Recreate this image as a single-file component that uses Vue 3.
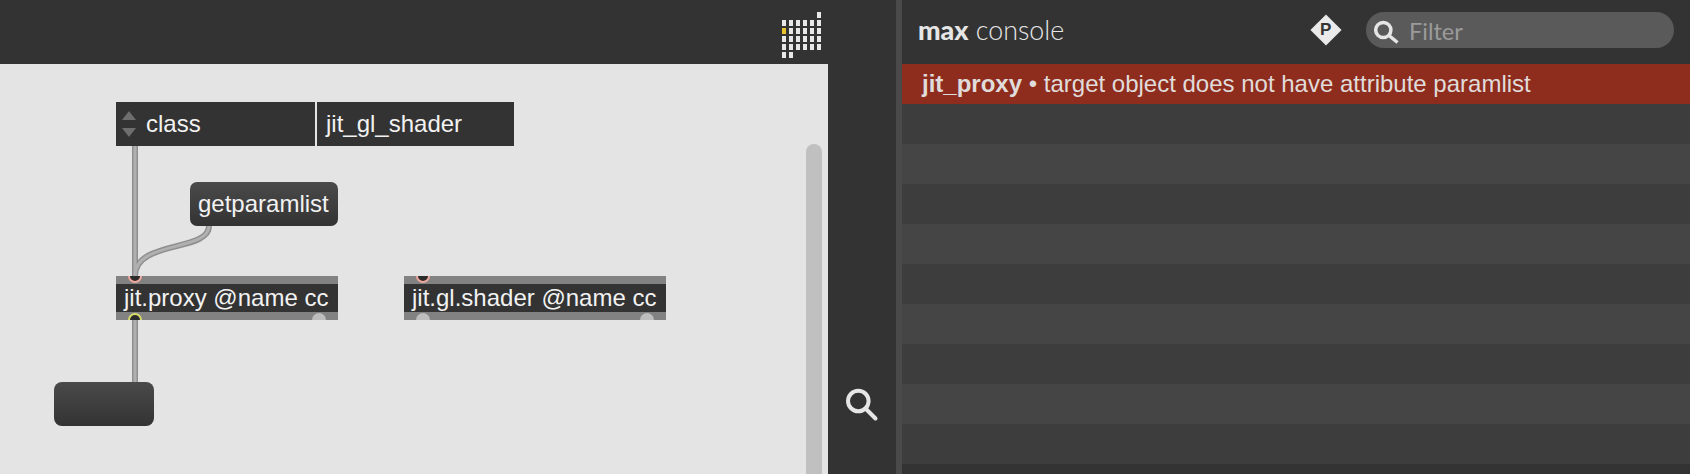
<template>
  <div class="app">
    <section class="patcher">
      <header class="toolbar">
        <div class="grid-icon">
          <span
            v-for="cell in gridCells"
            :key="cell.key"
            class="grid-cell"
            :class="{ off: !cell.on, lit: cell.lit }"
          ></span>
        </div>
      </header>
      <div class="patcher-body">
        <div class="canvas">
          <svg class="cords" width="806" height="410" viewBox="0 64 806 410">
            <g class="cord-edge">
              <path d="M135 146 V276" />
              <path d="M209 226 C209 252 135 240 135 276" />
              <path d="M135 320 V382" />
            </g>
            <g class="cord-core">
              <path d="M135 146 V276" />
              <path d="M209 226 C209 252 135 240 135 276" />
              <path d="M135 320 V382" />
            </g>
          </svg>

          <div class="node umenu">
            <span class="arrows"><i class="arrow-up"></i><i class="arrow-down"></i></span>
            class
          </div>
          <div class="node attr-value">jit_gl_shader</div>
          <div class="node message">getparamlist</div>

          <div class="node object proxy">
            <span class="port inlet" style="left: 12px"></span>
            <span class="obj-label">jit.proxy @name cc</span>
            <span class="port outlet active" style="left: 12px"></span>
            <span class="port outlet" style="left: 196px"></span>
          </div>
          <div class="node object shader">
            <span class="port inlet" style="left: 12px"></span>
            <span class="obj-label">jit.gl.shader @name cc</span>
            <span class="port outlet" style="left: 12px"></span>
            <span class="port outlet" style="left: 236px"></span>
          </div>

          <div class="node button-msg"></div>
          <div class="scrollbar"></div>
        </div>
        <aside class="sidebar">
          <svg class="zoom-icon" width="36" height="38" viewBox="0 0 36 38">
            <circle cx="15.3" cy="16" r="10.3" />
            <path d="M22.5 23.5 L32.5 33.5" />
          </svg>
        </aside>
      </div>
    </section>

    <div class="divider"></div>

    <section class="console">
      <header class="console-head">
        <h1 class="console-title"><b>max</b> console</h1>
        <div class="head-tools">
          <div class="diamond"><span>P</span></div>
          <div class="filter">
            <svg width="26" height="30" viewBox="0 0 26 30">
              <circle cx="9.3" cy="15" r="7.6" />
              <path d="M15 20.5 L23.5 27.5" />
            </svg>
            <span class="filter-text">Filter</span>
          </div>
        </div>
      </header>
      <div class="rows">
        <div class="row error"><b>jit_proxy</b> • target object does not have attribute paramlist</div>
        <div v-for="n in 9" :key="n" class="row" :class="{ light: n % 2 === 0 }"></div>
      </div>
    </section>
  </div>
</template>

<script setup>
const gridCells = [];
for (let r = 0; r < 6; r++) {
  for (let c = 0; c < 6; c++) {
    let on = true;
    if (r === 0 && c < 5) on = false;
    if (r === 5 && c > 1) on = false;
    gridCells.push({ key: r + "-" + c, on, lit: r === 2 && c === 0 });
  }
}
</script>

<style>
html,
body {
  margin: 0;
  background: #333;
  overflow: hidden;
}
</style>

<style scoped>
.app {
  display: flex;
  width: 1690px;
  height: 474px;
  overflow: hidden;
  background: #333;
  font-family: "Liberation Sans", Arial, sans-serif;
}

.patcher {
  width: 896px;
  display: flex;
  flex-direction: column;
}

.toolbar {
  height: 64px;
  flex: none;
  background: #333;
  display: flex;
  align-items: flex-start;
  padding: 12px 0 0 782px;
  box-sizing: border-box;
}

.grid-icon {
  display: grid;
  grid-template-columns: repeat(6, 4px);
  grid-auto-rows: 6px;
  column-gap: 3px;
  row-gap: 2px;
}

.grid-cell {
  background: #e8e8e8;
}

.grid-cell.off {
  background: transparent;
}

.grid-cell.lit {
  background: #e8c52c;
}

.patcher-body {
  flex: 1;
  display: flex;
  min-height: 0;
}

.canvas {
  position: relative;
  width: 828px;
  background: #e4e4e4;
  overflow: hidden;
}

.cords {
  position: absolute;
  left: 0;
  top: 0;
  fill: none;
}

.cord-edge path {
  stroke: #8f8f8f;
  stroke-width: 6;
}

.cord-core path {
  stroke: #b0b0b0;
  stroke-width: 3;
}

.node {
  position: absolute;
  box-sizing: border-box;
  height: 44px;
  color: #f2f2f2;
  font-size: 24px;
  line-height: 44px;
  white-space: nowrap;
}

.umenu {
  left: 116px;
  top: 38px;
  width: 199px;
  background: #333;
  padding-left: 6px;
  display: flex;
  align-items: center;
  gap: 10px;
}

.arrows {
  display: flex;
  flex-direction: column;
  gap: 8px;
}

.arrows i {
  display: block;
  width: 0;
  height: 0;
  border-left: 7.5px solid transparent;
  border-right: 7.5px solid transparent;
}

.arrow-up {
  border-bottom: 9px solid #6e6e6e;
}

.arrow-down {
  border-top: 9px solid #6e6e6e;
}

.attr-value {
  left: 317px;
  top: 38px;
  width: 197px;
  background: #333;
  padding-left: 9px;
}

.message {
  left: 190px;
  top: 118px;
  width: 148px;
  padding-left: 8px;
  border-radius: 7px;
  background: linear-gradient(#4a4a4a, #333);
}

.button-msg {
  left: 54px;
  top: 318px;
  width: 100px;
  border-radius: 8px;
  background: linear-gradient(#4a4a4a, #333);
}

.object {
  top: 212px;
  background: #828282;
  padding: 8px 0;
  overflow: hidden;
}

.proxy {
  left: 116px;
  width: 222px;
}

.shader {
  left: 404px;
  width: 262px;
}

.obj-label {
  display: block;
  height: 28px;
  line-height: 28px;
  padding-left: 8px;
  background: #333;
}

.port {
  position: absolute;
  width: 14px;
  height: 14px;
  box-sizing: border-box;
  border-radius: 50%;
}

.inlet {
  top: -7px;
  background: #2c2c2c;
  border: 2px solid #f0a79c;
}

.outlet {
  bottom: -7px;
  background: #bdbdbd;
}

.outlet.active {
  background: #2c2c2c;
  border: 2px solid #d8dc6a;
}

.scrollbar {
  position: absolute;
  left: 806px;
  top: 80px;
  width: 16px;
  height: 400px;
  border-radius: 8px;
  background: #c0c0c0;
}

.sidebar {
  width: 68px;
  background: #333;
  display: flex;
  justify-content: flex-start;
  align-items: flex-end;
  padding: 0 0 51px 15px;
  box-sizing: border-box;
}

.zoom-icon {
  fill: none;
  stroke: #e6e6e6;
  stroke-width: 4;
  stroke-linecap: round;
}

.divider {
  width: 6px;
  background: #4a4a4a;
}

.console {
  flex: 1;
  display: flex;
  flex-direction: column;
  min-width: 0;
}

.console-head {
  height: 64px;
  flex: none;
  display: flex;
  align-items: center;
  justify-content: space-between;
  padding: 0 16px 4px 16px;
  box-sizing: border-box;
  background: #333;
}

.console-title {
  margin: 0;
  font-family: Lato, sans-serif;
  font-size: 26.8px;
  font-weight: 300;
  color: #e6e6e6;
}

.console-title b {
  font-weight: 900;
}

.head-tools {
  display: flex;
  align-items: center;
  gap: 29px;
}

.diamond {
  width: 22px;
  height: 22px;
  background: #eaeaea;
  transform: rotate(45deg);
  display: flex;
  align-items: center;
  justify-content: center;
}

.diamond span {
  transform: rotate(-45deg);
  color: #333;
  font-size: 17px;
  font-weight: 700;
}

.filter {
  width: 308px;
  height: 36px;
  border-radius: 18px;
  background: #5a5a5a;
  display: flex;
  align-items: center;
  gap: 9px;
  padding-left: 8px;
  box-sizing: border-box;
  font-family: Lato, sans-serif;
  font-size: 23.5px;
  color: #9b9b9b;
}

.filter-text {
  padding-top: 2px;
}

.filter svg {
  fill: none;
  stroke: #e6e6e6;
  stroke-width: 3.5;
}

.rows {
  flex: 1;
  overflow: hidden;
}

.row {
  height: 40px;
  box-sizing: border-box;
  background: #3d3d3d;
  padding-left: 20px;
  font-size: 24px;
  line-height: 40px;
  color: #e0dcdb;
  white-space: nowrap;
}

.row.light {
  background: #454545;
}

.row.error {
  background: #8e2d1d;
}
</style>
